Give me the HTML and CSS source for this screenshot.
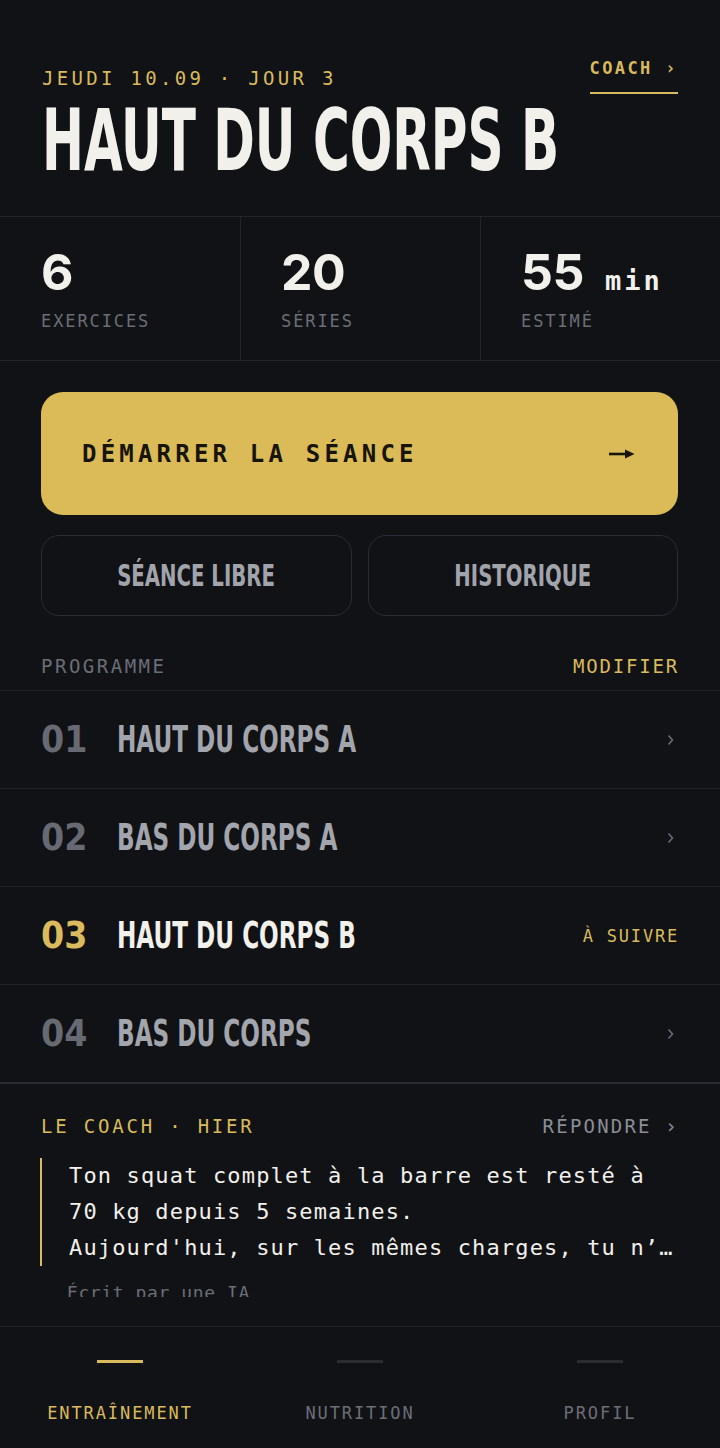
FILE: index.html
```html
<!DOCTYPE html>
<html lang="fr">
<head>
    <meta charset="UTF-8">
    <meta name="viewport" content="width=device-width, initial-scale=1.0">
    <title>Entraînement</title>
    <link rel="stylesheet" href="styles.css">
</head>
<body>
<div class="screen">
    <main class="content">
        <header class="top">
            <div class="top-left">
                <p class="date">JEUDI 10.09 · JOUR 3</p>
                <h1 class="title"><span class="cond">HAUT DU CORPS B</span></h1>
            </div>
            <a class="coach-link" href="#">COACH ›</a>
        </header>

        <section class="stats">
            <div class="stat">
                <div class="stat-num">6</div>
                <div class="stat-label">EXERCICES</div>
            </div>
            <div class="stat">
                <div class="stat-num">20</div>
                <div class="stat-label">SÉRIES</div>
            </div>
            <div class="stat">
                <div class="stat-num">55<span class="unit">min</span></div>
                <div class="stat-label">ESTIMÉ</div>
            </div>
        </section>

        <div class="actions">
            <button class="btn-start">
                <span>DÉMARRER LA SÉANCE</span>
                <svg width="26" height="12" viewBox="0 0 26 12">
                    <path d="M0 6H19" stroke="#17140a" stroke-width="2.6"/>
                    <path d="M16 1.5L25.5 6L16 10.5Z" fill="#17140a"/>
                </svg>
            </button>
            <div class="btn-row">
                <button class="btn-ghost"><span class="cond">SÉANCE LIBRE</span></button>
                <button class="btn-ghost"><span class="cond">HISTORIQUE</span></button>
            </div>
        </div>

        <div class="section-head">
            <span>PROGRAMME</span>
            <a href="#" class="edit-link">MODIFIER</a>
        </div>

        <ul class="program">
            <li class="prog-row">
                <span class="prog-num cond-num">01</span>
                <span class="prog-name cond">HAUT DU CORPS A</span>
                <svg class="chev" width="7" height="12" viewBox="0 0 7 12"><path d="M1.5 1.5L5.5 6L1.5 10.5" fill="none" stroke="#6c6f77" stroke-width="1.5"/></svg>
            </li>
            <li class="prog-row">
                <span class="prog-num cond-num">02</span>
                <span class="prog-name cond">BAS DU CORPS A</span>
                <svg class="chev" width="7" height="12" viewBox="0 0 7 12"><path d="M1.5 1.5L5.5 6L1.5 10.5" fill="none" stroke="#6c6f77" stroke-width="1.5"/></svg>
            </li>
            <li class="prog-row next">
                <span class="prog-num cond-num">03</span>
                <span class="prog-name cond">HAUT DU CORPS B</span>
                <span class="next-tag">À SUIVRE</span>
            </li>
            <li class="prog-row">
                <span class="prog-num cond-num">04</span>
                <span class="prog-name cond">BAS DU CORPS</span>
                <svg class="chev" width="7" height="12" viewBox="0 0 7 12"><path d="M1.5 1.5L5.5 6L1.5 10.5" fill="none" stroke="#6c6f77" stroke-width="1.5"/></svg>
            </li>
        </ul>

        <section class="coach">
            <div class="coach-head">
                <span class="coach-from">LE COACH · HIER</span>
                <a href="#" class="coach-reply">RÉPONDRE ›</a>
            </div>
            <blockquote class="quote">
                Ton squat complet à la barre est resté à 70 kg depuis 5 semaines.
                <span class="quote-cut">Aujourd'hui, sur les mêmes charges, tu n’as plus la même vitesse de barre.</span>
            </blockquote>
            <p class="ai-note">Écrit par une IA</p>
        </section>
    </main>

    <nav class="tabbar">
        <a href="#" class="tab active"><span class="tab-bar"></span><span class="tab-label">ENTRAÎNEMENT</span></a>
        <a href="#" class="tab"><span class="tab-bar"></span><span class="tab-label">NUTRITION</span></a>
        <a href="#" class="tab"><span class="tab-bar"></span><span class="tab-label">PROFIL</span></a>
    </nav>
</div>
</body>
</html>
```

FILE: styles.css
```css
body {
    margin: 0;
    background-color: #111216;
    color: #f1f0eb;
    font-family: "DejaVu Sans Mono", "Liberation Mono", monospace;
}

a {
    text-decoration: none;
}

.screen {
    height: 1448px;
    display: flex;
    flex-direction: column;
}

.content {
    height: 1297px;
    overflow: hidden;
}

/* condensed display type */
.cond {
    display: inline-block;
    font-family: "DejaVu Sans Condensed", "DejaVu Sans", sans-serif;
    font-stretch: condensed;
    font-weight: 700;
    white-space: nowrap;
    transform: scaleX(0.655);
    transform-origin: left center;
}

.cond-num {
    font-family: "DejaVu Sans Condensed", "DejaVu Sans", sans-serif;
    font-stretch: condensed;
    font-weight: 700;
}

/* header */
.top {
    display: flex;
    justify-content: space-between;
    align-items: flex-start;
    padding: 58px 42px 33px 42px;
}

.top-left {
    flex: 1;
    min-width: 0;
}

.date {
    margin: 9px 0 0;
    font-size: 19px;
    line-height: 22px;
    letter-spacing: 3.3px;
    color: #d9ba5c;
}

.title {
    margin: 9px 0 0;
    font-size: 85px;
    line-height: 85px;
    white-space: nowrap;
}

.coach-link {
    flex: none;
    font-weight: 700;
    font-size: 17px;
    line-height: 20px;
    letter-spacing: 2.4px;
    color: #d9ba5c;
    padding-bottom: 14px;
    border-bottom: 2px solid #d9ba5c;
}

/* stats */
.stats {
    display: grid;
    grid-template-columns: repeat(3, 1fr);
    border-top: 1px solid #23252b;
    border-bottom: 1px solid #23252b;
}

.stat {
    padding: 30px 0 29px 40px;
}

.stat:first-child {
    padding-left: 41px;
}

.stat + .stat {
    border-left: 1px solid #23252b;
}

.stat-num {
    font-family: Inter, "DejaVu Sans", sans-serif;
    font-weight: 700;
    font-size: 50px;
    line-height: 50px;
    letter-spacing: -0.5px;
}

.unit {
    margin-left: 21px;
    font-family: "DejaVu Sans Mono", monospace;
    font-size: 27px;
    line-height: 0;
    letter-spacing: 3px;
}

.stat-label {
    margin-top: 14px;
    font-size: 17px;
    line-height: 20px;
    letter-spacing: 1.9px;
    color: #6b6e76;
}

/* buttons */
.actions {
    padding: 31px 42px 0 41px;
}

.btn-start {
    display: flex;
    align-items: center;
    justify-content: space-between;
    width: 100%;
    height: 123px;
    padding: 0 43px 0 41px;
    border: none;
    border-radius: 22px;
    background-color: #dbbb58;
    color: #17140a;
    font-family: "DejaVu Sans Mono", monospace;
    font-weight: 700;
    font-size: 24px;
    letter-spacing: 4.2px;
    cursor: pointer;
}

.btn-row {
    display: grid;
    grid-template-columns: 1fr 1fr;
    gap: 16px;
    margin-top: 20px;
}

.btn-ghost {
    height: 81px;
    border: 1px solid #2b2d34;
    border-radius: 18px;
    background: transparent;
    color: #a2a4ac;
    font-size: 30px;
    cursor: pointer;
}

.btn-ghost .cond {
    transform: scaleX(0.73);
    transform-origin: center;
}

/* programme */
.section-head {
    display: flex;
    justify-content: space-between;
    padding: 39px 41px 13px;
    border-bottom: 1px solid #202228;
    font-size: 19px;
    line-height: 22px;
    letter-spacing: 2.5px;
    color: #6b6e76;
}

.edit-link {
    letter-spacing: 1.8px;
    color: #d9ba5c;
}

.program {
    list-style: none;
    margin: 0;
    padding: 0;
}

.prog-row {
    display: flex;
    align-items: center;
    height: 97px;
    padding: 0 41px;
    border-bottom: 1px solid #202228;
}

.prog-row:last-child {
    border-bottom: 2px solid #2a2c32;
}

.prog-num {
    flex: none;
    width: 76px;
    font-size: 37px;
    color: #676a73;
}

.prog-name {
    margin-right: auto;
    font-size: 37px;
    color: #a3a5ad;
    transform: scaleX(0.695);
}

.chev {
    margin-right: 5px;
}

.next .prog-num {
    color: #d9ba5c;
}

.next .prog-name {
    color: #f1f0eb;
}

.next-tag {
    font-size: 17px;
    letter-spacing: 1.8px;
    color: #d9ba5c;
}

/* coach */
.coach {
    padding: 31px 41px 0;
}

.coach-head {
    display: flex;
    justify-content: space-between;
    font-size: 19px;
    line-height: 22px;
}

.coach-from {
    letter-spacing: 2.8px;
    color: #d9ba5c;
}

.coach-reply {
    letter-spacing: 2.2px;
    color: #8b8e96;
}

.quote {
    margin: 21px 0 0 -1px;
    padding-left: 27px;
    border-left: 2px solid #d9ba5c;
    font-size: 22px;
    line-height: 36px;
    letter-spacing: 1.15px;
    color: #f1f0eb;
}

.quote-cut {
    display: block;
    white-space: nowrap;
    overflow: hidden;
    text-overflow: ellipsis;
}

.ai-note {
    margin: 16px 0 0 26px;
    font-size: 18px;
    line-height: 22px;
    letter-spacing: 0.6px;
    color: #6b6e76;
}

/* tab bar */
.tabbar {
    flex: 1;
    margin-top: 29px;
    border-top: 1px solid #22242a;
    display: grid;
    grid-template-columns: repeat(3, 1fr);
}

.tab {
    display: flex;
    flex-direction: column;
    align-items: center;
    padding-top: 33px;
}

.tab-bar {
    width: 46px;
    height: 3px;
    background-color: #2a2c32;
}

.tab-label {
    margin-top: 40px;
    font-size: 17px;
    line-height: 20px;
    letter-spacing: 1.9px;
    color: #6b6e76;
}

.tab.active .tab-bar {
    background-color: #d9ba5c;
}

.tab.active .tab-label {
    color: #d9ba5c;
}
```
